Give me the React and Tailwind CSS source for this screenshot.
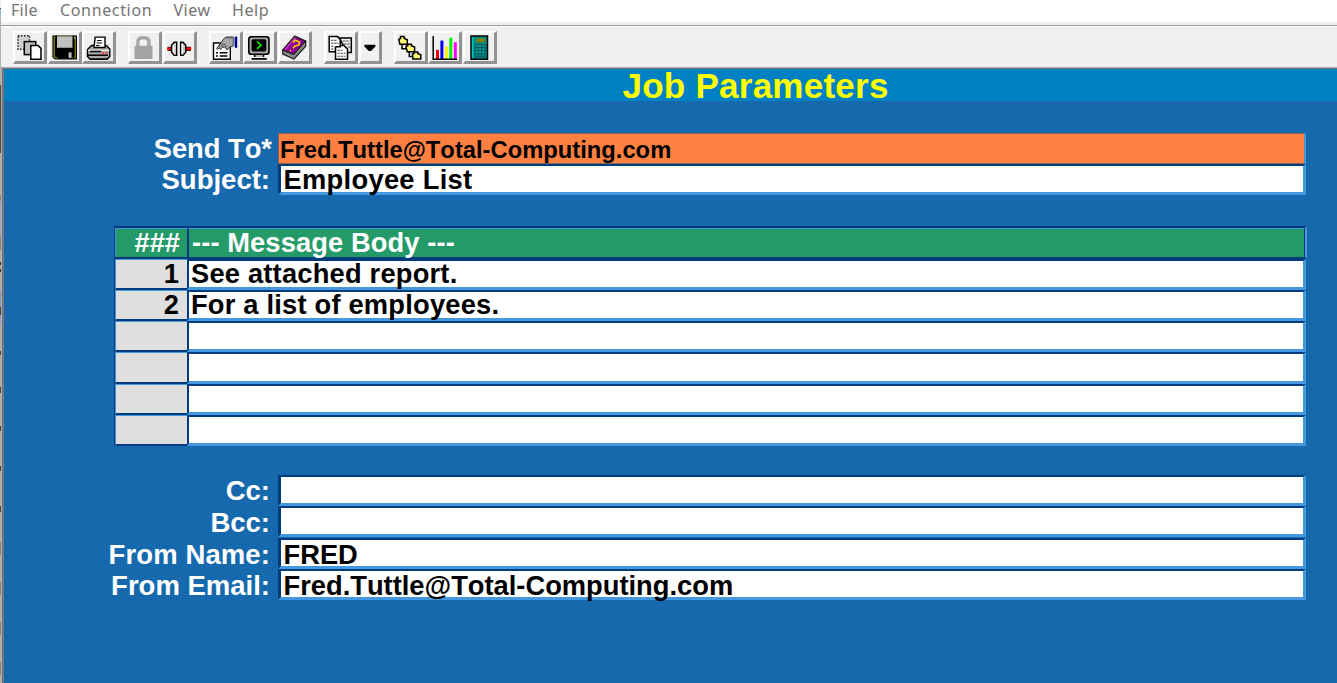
import React from "react";

const INK = "font-['Liberation_Sans',Arial,sans-serif] font-bold leading-none whitespace-pre [font-kerning:none]";

function ToolButton({ width = "w-[34px]", box, children }) {
  return (
    <div className={`${width} h-[32.5px] shrink-0 bg-[#f0f0f0] border-t-2 border-l-2 border-r-[3px] border-b-[3px] border-t-white border-l-white border-r-[#929292] border-b-[#929292]`}>
      <svg viewBox={box} className="block w-full h-full overflow-visible">{children}</svg>
    </div>
  );
}

const CopyIcon = () => (
  <g strokeWidth="1.5">
    <rect x="3" y="2.7" width="11.5" height="13.5" fill="#d0d0d0" stroke="#222" strokeDasharray="1.5 1.5" />
    <rect x="9.3" y="8.6" width="11.4" height="13" fill="#c0c0c0" stroke="#000" />
    <path d="M15.8 12.4h7.2l3 3v10.9H15.8z" fill="#fff" stroke="#000" />
  </g>
);

const SaveIcon = () => (
  <g>
    <path d="M2.4 2.4h24.6v24.2H4.9L2.4 24.2z" fill="#000" />
    <path d="M4.2 4.2h21v20.7H5.6L4.2 23.5z" fill="none" stroke="#808000" strokeWidth="1.4" />
    <rect x="7" y="3.4" width="15.8" height="11.7" fill="#c0c0c0" />
    <path d="M6.2 2.6v13h17.2v-13M7.5 18h16v8" fill="none" stroke="#000" strokeWidth="1.6" />
    <rect x="7.6" y="18.5" width="14.6" height="7.3" fill="#000" />
    <rect x="18.6" y="19.4" width="3" height="5.5" fill="#c0c0c0" />
    <rect x="24" y="4" width="1.5" height="1.5" fill="#c0c0c0" />
  </g>
);

const PrintIcon = () => (
  <g stroke="#000" strokeWidth="1.4">
    <path d="M3.5 16.5l4-4h14.8l3.5 3.5v7.5l-2.6 2.7H6.1l-2.6-2.7z" fill="#a8a8a8" />
    <path d="M11.2 4.1h9.8v10.4h-11z" fill="#fff" />
    <path d="M13 7.5h4.5M12.6 10h5.5M12 12.5h3.5" strokeWidth="1.1" />
    <path d="M4.3 17.3h21" stroke="#fff" strokeWidth="1.1" />
    <path d="M6 18.5h11M4 22.3h20M6.5 26.2h17.5" />
    <path d="M17.8 20h2M21.2 20h2" stroke="#f22" strokeWidth="1.6" />
  </g>
);

const LockIcon = () => (
  <g>
    <path d="M8 15V9q0-4.3 4.6-4.3h1.6q4.7 0 4.7 4.3v6" fill="none" stroke="#a6a6a6" strokeWidth="3.6" />
    <path d="M10.2 14.5V9.3q0-2 3-2.3" fill="none" stroke="#fafafa" strokeWidth="1.2" />
    <rect x="4.5" y="12.7" width="18" height="13.3" rx="1" fill="#a3a3a3" />
  </g>
);

const ConnectIcon = () => (
  <g strokeWidth="1.4">
    <path d="M2.6 15.8h5.1M20.5 15.8h5.5" stroke="#422" strokeWidth="4.2" />
    <path d="M2.2 15.8h5.5M20.5 15.8h5.7" stroke="#f00" strokeWidth="2.6" />
    <path d="M11.7 9.2v13.2H9.2l-2.7-3.2v-7l2.7-3z" fill="#c8c8c8" stroke="#000" />
    <path d="M15.6 9.2H18l2.8 3v7L18 22.4h-2.4z" fill="#c8c8c8" stroke="#000" />
    <path d="M8.6 12v8M17.2 11v9.5" stroke="#fff" strokeWidth="1.2" />
  </g>
);

const PropertiesIcon = () => (
  <g stroke="#000" strokeWidth="1.4">
    <path d="M2.5 10h16.8v16.2H2.5z" fill="#fff" />
    <path d="M5 19.8h1.8M8.8 19.8h7.5M5 23h1.8M8.8 23h7.5" />
    <path d="M5.5 15.5L13.5 5l2-1h6.8v9l-3.6 1-2.5 3-2.4-3-2.3.5-2 2-1.2-1.5-1.8 1.5z" fill="#a8a8a8" stroke="#333" strokeWidth="1" />
    <path d="M8 13.8l3.6-3.8M10.5 14l2.8-3.2 2.6 4M15.3 4.8h6.5" fill="none" stroke="#555" strokeDasharray="1.4 .8" />
    <path d="M25 3.6v11.2" stroke="#000098" strokeWidth="2.4" />
    <path d="M22.8 4.5v8.5" stroke="#557ba0" strokeWidth="1.3" />
  </g>
);

const TerminalIcon = () => (
  <g>
    <rect x="3.8" y="3.8" width="20.2" height="17.5" rx="2.6" fill="#a5a5a5" stroke="#000" strokeWidth="1.6" />
    <rect x="6.5" y="6.2" width="14.8" height="12.4" rx="2" fill="#000" />
    <path d="M12 8.5l4 3.7-4 3.7" fill="none" stroke="#0f0" strokeWidth="1.5" />
    <path d="M9.8 21.5v2.6M18.4 21.5v2.6M6.6 25.8h15.2" fill="none" stroke="#000" strokeWidth="1.8" />
    <path d="M10.6 23h7" stroke="#aaa" strokeWidth="1.7" />
  </g>
);

const BookIcon = () => (
  <g strokeWidth="1.4" stroke="#222">
    <path d="M2.8 17.2L14.8 3.3l10.8 4.9v5L14 26 2.8 21z" fill="#c6c6c6" />
    <path d="M2.8 17.2L14.8 3.3l10.8 4.9-12 13.5z" fill="#8e0092" />
    <path d="M4.6 16.8L15.3 4.7" stroke="#e83be8" strokeWidth="1.1" />
    <path d="M4 19.5l9.9 4.3 11-12" fill="none" stroke="#666" strokeWidth="1" />
    <path d="M13 9.3l2.2-2 4.3 1.8-.6 2.8-4.4 1.4-1.5 2M11 17l-1.2 1" fill="none" stroke="#f3d000" strokeWidth="1.6" />
  </g>
);

const PagesIcon = () => (
  <g stroke="#000" strokeWidth="1.5">
    <path d="M13.5 5h11.8v14.5h-4z" fill="#eee" />
    <path d="M3.2 3.6h8.3l2.8 2.8v12.4H3.2z" fill="#fff" />
    <path d="M9.5 13.8h4.8V8.5M14.3 12.5h3.5l3.7 3.4v10.3h-12V13.8" fill="#fff" />
    <path d="M5 7.3h5.5M5 10.3h7.5M5 13.3h3.5M5 16h3.5M17 8h6.5M18 11h6M22 14h2.5M11.5 17.3h5M11.5 20.3h8M11.5 23.3h8" stroke="#444" strokeWidth="1.1" strokeDasharray="2.4 .7" />
  </g>
);

const ArrowIcon = () => <path d="M3.4 11.8h11v1.6L10 18H7.8l-4.4-4.6z" fill="#000" />;

const FoldersIcon = () => (
  <g fill="#ffff70" stroke="#000" strokeWidth="1.5">
    <path d="M6 11.5v4.2h5M13.3 19v4.5h4" fill="none" />
    <path d="M2.8 6.3l1.7-.7V3.6h3.6v1.6l3.2 1.5v4.6H3.9z" />
    <path d="M10 13.3l1.8-.5v-1.5h3.6v1.5l3.2 1.3v4.6h-7.4z" />
    <path d="M16.5 21l1.5-.5v-1.4h3.8v1.4l3 1.3v4.2h-7.9z" />
  </g>
);

const ChartIcon = () => (
  <g strokeWidth="3">
    <path d="M7.5 26V16.8" stroke="#f00000" />
    <path d="M11.9 26V7.6" stroke="#0000f0" />
    <path d="M16.4 26V13.5" stroke="#fff200" />
    <path d="M20.8 26V4.7" stroke="#00f000" />
    <path d="M25.3 26V9.2" stroke="#f0f" />
    <path d="M3.2 3v23.2h23.8" fill="none" stroke="#000" strokeWidth="1.5" />
  </g>
);

const CalculatorIcon = () => (
  <g>
    <rect x="6" y="3" width="16.5" height="23.2" fill="#008b8b" stroke="#000" strokeWidth="1.5" />
    <path d="M7.6 25V4.5" stroke="#00c6c6" strokeWidth="1.4" />
    <rect x="11.3" y="5.5" width="8.5" height="3.7" fill="#807f00" />
    <path d="M9.6 11.5h11M9.6 14.6h11M9.6 17.7h11M9.6 20.8h11M9.6 23.8h11M10 11v13M13.3 11v13M16.6 11v13M20.1 11v13" stroke="#075252" strokeWidth=".9" />
    <path d="M11.2 13h1.2M14.5 13h1.2M18 13h1.2M11.2 16.2h1.2M14.5 16.2h1.2M18 16.2h1.2M11.2 19.3h1.2M14.5 19.3h1.2M18 19.3h1.2" stroke="#2bcaca" />
  </g>
);

const BOX = "0 0 29 27.5";

function Field({ label, labelClass = "pt-[3px]", value = "", valueClass = "", height = "h-[31px]" }) {
  return (
    <div className={`flex ${height}`}>
      <div className={`${INK} w-[274px] shrink-0 pr-[8px] text-right text-[27.5px] text-white ${labelClass}`}>{label}</div>
      <div className="w-[1028px] h-[31px] bg-white border-l-[3px] border-t-2 border-b-[3px] border-r-[3px] border-l-[#003b7c] border-t-[#003b7c] border-r-[#4498df] border-b-[#4498df]">
        <div className={`${INK} text-[27.3px] text-black pl-[2.5px] ${valueClass}`}>{value}</div>
      </div>
    </div>
  );
}

const rows = [
  { n: "1", text: "See attached report.", h: "h-[31px]", t: "tracking-[0.2px]", shift: "-mt-px" },
  { n: "2", text: "For a list of employees.", h: "h-[31px]", t: "tracking-[0.2px]", shift: "-mt-px" },
  { n: "", text: "", h: "h-[31px]", t: "", shift: "" },
  { n: "", text: "", h: "h-[32px]", t: "", shift: "" },
  { n: "", text: "", h: "h-[31px]", t: "", shift: "" },
  { n: "", text: "", h: "h-[31px]", t: "", shift: "" },
];

const edge = [
  [0, 8, "#eee"], [8, 9, "#7b3040"], [9, 16, "#8fb5d8"], [16, 85, "#b3b3b3"], [85, 153, "#4b4b4b"],
  [153, 195, "#b0b0b0"], [195, 201, "#888"], [201, 236, "#9aabc3"], [236, 250, "#888"], [250, 262, "#b0b0b0"],
  [262, 265, "#333"], [265, 269, "#aaa"], [269, 272, "#333"], [272, 290, "#b0b0b0"], [290, 307, "#8899c0"],
  [307, 315, "#444"], [315, 325, "#8da4c9"], [325, 351, "#b0b0b0"], [351, 355, "#444"], [355, 387, "#b0b0b0"],
  [387, 393, "#444"], [393, 426, "#b0b0b0"], [426, 431, "#444"], [431, 466, "#b0b0b0"], [466, 471, "#444"],
  [471, 506, "#b0b0b0"], [506, 512, "#444"], [512, 542, "#b0b0b0"], [542, 555, "#888"], [555, 582, "#b0b0b0"],
  [582, 595, "#888"], [595, 622, "#b0b0b0"], [622, 635, "#888"], [635, 662, "#b0b0b0"], [662, 675, "#888"], [675, 683, "#b0b0b0"],
];

export default function App() {
  return (
    <div className="w-[1337px] h-[683px] flex overflow-hidden bg-[#f0f0f0]">
      <div className="w-px shrink-0 flex flex-col">
        {edge.map(([a, b, c]) => (
          <div key={a} style={{ height: b - a, background: c }} />
        ))}
      </div>
      <div className="flex-1 flex flex-col min-w-0">
        <div className="h-[22px] shrink-0 bg-white flex pl-[10px] font-['Noto_Sans',sans-serif] text-[16px] leading-[21px] text-[#747474]">
          <span className="w-[49px] tracking-[0.3px]">File</span>
          <span className="w-[113.5px] tracking-[0.65px]">Connection</span>
          <span className="w-[58.5px] tracking-[0.5px]">View</span>
          <span className="tracking-[0.6px]">Help</span>
        </div>
        <div className="h-[5px] shrink-0 bg-[#f0f0f0] border-b border-white flex flex-col justify-end">
          <div className="h-px bg-[#999]" />
        </div>
        <div className="h-[40px] shrink-0 bg-[#f0f0f0] flex pl-[12px] pt-[4px] gap-[12px]">
          <div className="flex gap-[0.5px]">
            <ToolButton box={BOX}><CopyIcon /></ToolButton>
            <ToolButton box={BOX}><SaveIcon /></ToolButton>
            <ToolButton box={BOX}><PrintIcon /></ToolButton>
          </div>
          <div className="flex gap-[0.5px]">
            <ToolButton box={BOX}><LockIcon /></ToolButton>
            <ToolButton box={BOX}><ConnectIcon /></ToolButton>
          </div>
          <div className="flex gap-[0.5px]">
            <ToolButton box={BOX}><PropertiesIcon /></ToolButton>
            <ToolButton box={BOX}><TerminalIcon /></ToolButton>
            <ToolButton box={BOX}><BookIcon /></ToolButton>
          </div>
          <div className="flex gap-[0.5px] ml-[0.5px]">
            <ToolButton box={BOX}><PagesIcon /></ToolButton>
            <ToolButton width="w-[23px]" box="0 0 18 27.5"><ArrowIcon /></ToolButton>
          </div>
          <div className="flex gap-[0.5px]">
            <ToolButton box={BOX}><FoldersIcon /></ToolButton>
            <ToolButton box={BOX}><ChartIcon /></ToolButton>
            <ToolButton box={BOX}><CalculatorIcon /></ToolButton>
          </div>
        </div>
        <div className="flex-1 flex border-l border-t border-[#aaa] min-h-0">
          <div className="flex-1 flex flex-col border-l-2 border-t border-[#767676] bg-[#1769ad]">
            <div className="h-[32px] shrink-0 bg-[#0081c3] flex pl-[618.5px]">
              <h1 className={`${INK} text-[35px] tracking-[0.25px] text-[#ffff00] -mt-px`}>Job Parameters</h1>
            </div>
            <div className="pt-[32px] flex h-[63px]">
              <div className={`${INK} w-[274px] shrink-0 pr-[6px] pt-[2px] text-right text-[27.3px] text-white`}>Send To*</div>
              <div className="w-[1028px] h-[31px] bg-[#ff8040] border border-[#806558] border-r-2 border-r-[#4498df]">
                <div className={`${INK} text-[23.75px] text-black pt-[4px] pl-px`}>Fred.Tuttle@Total-Computing.com</div>
              </div>
            </div>
            <Field label="Subject:" labelClass="pt-[2px]" value="Employee List" valueClass="tracking-[0.3px]" />
            <div className="mt-[31px] ml-[110px] w-[1193px] border-l border-l-[#003b7c]">
              <div className="h-[33px] flex border-t-2 border-b-[2px] border-[#003b7c] border-r-2 border-r-[#4498df]">
                <div className={`${INK} w-[72px] shrink-0 bg-[#259a69] border-t border-l border-[#4498df] text-white text-[27.3px] text-right pr-[7px]`}>###</div>
                <div className={`${INK} flex-1 bg-[#259a69] border-l-2 border-l-[#003b7c] border-t border-t-[#4498df] border-r border-r-[#003b7c] text-white text-[27.3px] tracking-[0.1px] pl-[3px]`}>--- Message Body ---</div>
              </div>
              {rows.map((r, i) => (
                <div key={i} className={`${r.h} flex w-[1191px]`}>
                  <div className={`${INK} w-[72px] shrink-0 bg-[#dfdfdf] border-t border-l border-b-2 border-t-[#4498df] border-l-[#4498df] border-b-[#003b7c] text-black text-[27.3px] text-right pr-[8px] pt-px`}>
                    <div className={r.shift}>{r.n}</div>
                  </div>
                  <div className={`${INK} flex-1 bg-white border-t-2 border-l-2 border-b-[3px] border-r-[3px] border-t-[#003b7c] border-l-[#003b7c] border-b-[#4498df] border-r-[#4498df] text-black text-[27.3px] pl-[2px] ${r.t}`}>
                    <div className={r.shift}>{r.text}</div>
                  </div>
                </div>
              ))}
            </div>
            <div className="mt-[29px]">
              <Field label="Cc:" labelClass="pt-[2px]" />
              <Field label="Bcc:" height="h-[32px]" />
              <Field label="From Name:" value="FRED" valueClass="pt-px" labelClass="pt-[3px] tracking-[0.1px]" />
              <Field label="From Email:" value="Fred.Tuttle@Total-Computing.com" valueClass="pt-px" />
            </div>
          </div>
        </div>
      </div>
    </div>
  );
}
